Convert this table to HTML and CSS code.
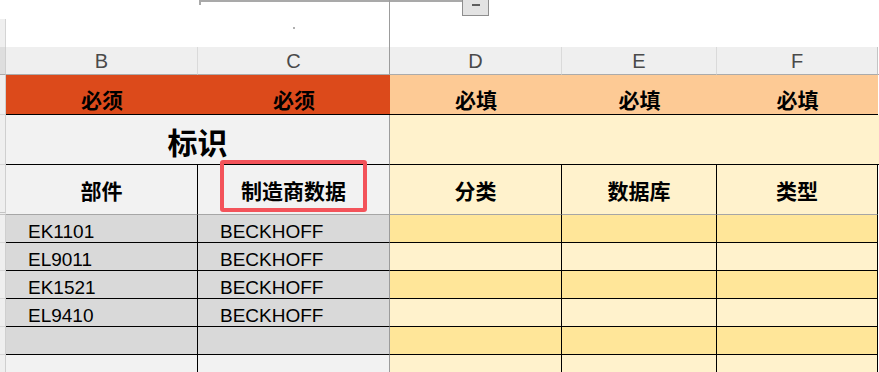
FILE: index.html
```html
<!DOCTYPE html>
<html lang="zh">
<head>
<meta charset="utf-8">
<link rel="stylesheet" href="styles.css">
<title>Sheet</title>
</head>
<body>
<div class="top">
  <div class="strip-top"></div>
  <div class="bar-line"></div>
  <div class="bar-tick"></div>
  <div class="bar-btn"><span class="dash"></span></div>
  <div class="dot"></div>
  <div class="freeze"></div>
</div>
<div class="sheet">
  <!-- column headers -->
  <div class="rh rh-corner"></div>
  <div class="ch ch-b">B</div>
  <div class="ch ch-c">C</div>
  <div class="ch ch-d">D</div>
  <div class="ch ch-e">E</div>
  <div class="ch ch-f">F</div>
  <div class="ex ex-h"></div>

  <!-- row 1 -->
  <div class="rh"></div>
  <div class="req req-b">必须</div>
  <div class="req req-c">必须</div>
  <div class="fill">必填</div>
  <div class="fill">必填</div>
  <div class="fill">必填</div>
  <div class="ex"></div>

  <!-- row 2 -->
  <div class="rh"></div>
  <div class="ident">标识</div>
  <div class="cream-merge"></div>

  <!-- row 3 -->
  <div class="rh rh-split"></div>
  <div class="sub sub-b">部件</div>
  <div class="sub sub-c"><span>制造商数据</span><div class="mark"></div></div>
  <div class="sub sub-y">分类</div>
  <div class="sub sub-y">数据库</div>
  <div class="sub sub-y">类型</div>
  <div class="ex"></div>

  <!-- data -->
  <div class="rh"></div>
  <div class="d d-b">EK1101</div>
  <div class="d d-c">BECKHOFF</div>
  <div class="y y1"></div><div class="y y1"></div><div class="y y1"></div>
  <div class="ex"></div>

  <div class="rh"></div>
  <div class="d d-b">EL9011</div>
  <div class="d d-c">BECKHOFF</div>
  <div class="y y2"></div><div class="y y2"></div><div class="y y2"></div>
  <div class="ex"></div>

  <div class="rh"></div>
  <div class="d d-b">EK1521</div>
  <div class="d d-c">BECKHOFF</div>
  <div class="y y1"></div><div class="y y1"></div><div class="y y1"></div>
  <div class="ex"></div>

  <div class="rh"></div>
  <div class="d d-b">EL9410</div>
  <div class="d d-c">BECKHOFF</div>
  <div class="y y2"></div><div class="y y2"></div><div class="y y2"></div>
  <div class="ex"></div>

  <div class="rh"></div>
  <div class="d d-b"></div>
  <div class="d d-c"></div>
  <div class="y y1"></div><div class="y y1"></div><div class="y y1"></div>
  <div class="ex"></div>

  <div class="rh"></div>
  <div class="d d-b d-light"></div>
  <div class="d d-c d-light"></div>
  <div class="y y2"></div><div class="y y2"></div><div class="y y2"></div>
  <div class="ex"></div>
</div>
</body>
</html>
```

FILE: styles.css
```css
* { box-sizing: border-box; }
html, body { margin: 0; padding: 0; background: #ffffff; overflow: hidden; }
body { width: 879px; height: 372px; font-family: "Liberation Sans", Arial, sans-serif; }

.top { position: relative; height: 47px; background: #ffffff; }
.strip-top { position: absolute; left: 0; top: 19px; width: 6px; height: 28px; background: #efefef; border-right: 1px solid #d4d4d4; }
.bar-line { position: absolute; left: 200px; top: 0; width: 263px; height: 2px; background: #a9a9a9; }
.bar-tick { position: absolute; left: 199px; top: 0; width: 2px; height: 5px; background: #a9a9a9; }
.bar-btn { position: absolute; left: 462px; top: -2px; width: 27px; height: 18px; background: #e3e3e3; border: 1px solid #8e8e8e; }
.bar-btn .dash { position: absolute; left: 9px; top: 5px; width: 8px; height: 2px; background: #5e5e5e; }
.dot { position: absolute; left: 293px; top: 27px; width: 2px; height: 2px; background: #b0b0b0; }
.freeze { position: absolute; left: 389px; top: 0; width: 1px; height: 47px; background: #9c9c9c; }

.sheet {
  display: grid;
  grid-template-columns: 6px 192px 192px 172px 155px 161px 1px;
  grid-template-rows: 28px 40px 50px 50px 28px 28px 28px 28px 28px 28px;
}

.rh { background: #efefef; border-right: 1px solid #cfcfcf; border-bottom: 1px solid #d6d6d6; }
.rh-corner { background: #dedede; border-bottom: 1px solid #ababab; }
.rh-split { border-bottom: 3px double #c4c4c4; }

.ch {
  background: #efefef; border-bottom: 1px solid #ababab; border-right: 1px solid #dadada;
  display: flex; align-items: center; justify-content: center; padding-top: 2px;
  font-family: "Liberation Sans", Arial, sans-serif; font-size: 20px; color: #4a4a4a;
}
.ch-c { border-right-color: #9c9c9c; }
.ch-f { border-right-color: #c4c4c4; }
.ex-h { background: #efefef; border-bottom: 1px solid #ababab; }

.req, .fill, .ident, .sub {
  font-family: "Noto Sans CJK SC", "Noto Sans", sans-serif; font-weight: 700; color: #000000;
  display: flex; justify-content: center;
}
.req, .fill { align-items: flex-end; font-size: 21px; line-height: 1; padding-bottom: 4px; border-bottom: 1px solid #000000; }
.req { background: #dc4a1b; }
.fill { background: #fdca95; }
.ex { background: #ffffff; }

.ident {
  grid-column: 2 / span 2; background: #f2f2f2; border-right: 1px solid #9c9c9c; border-bottom: 1px solid #000000;
  align-items: center; font-size: 30px; line-height: 1; padding-top: 2px;
}
.cream-merge { grid-column: 4 / span 4; background: #fff2cc; border-bottom: 1px solid #000000; }

.sub { align-items: center; font-size: 21px; line-height: 1; padding-top: 2px; border-bottom: 1px solid #a6a6a6; border-right: 1px solid #000000; }
.sub-b, .sub-c { background: #f2f2f2; }
.sub-c { position: relative; border-right-color: #9c9c9c; }
.sub-y { background: #fff2cc; }
.mark { position: absolute; left: 22px; top: -5px; width: 147px; height: 52px; border: 4px solid #f3535a; border-radius: 3px; }

.d {
  background: #d9d9d9; border-right: 1px solid #000000; border-bottom: 1px solid #000000;
  display: flex; align-items: flex-end; padding-left: 22px; padding-bottom: 1px;
  font-family: "Liberation Sans", Arial, sans-serif; font-size: 19px; line-height: 1; color: #000000;
}
.d-c { border-right-color: #9c9c9c; }
.d-light { background: #f2f2f2; }
.y { border-right: 1px solid #000000; border-bottom: 1px solid #000000; }
.y1 { background: #ffe699; }
.y2 { background: #fff2cc; }
```
